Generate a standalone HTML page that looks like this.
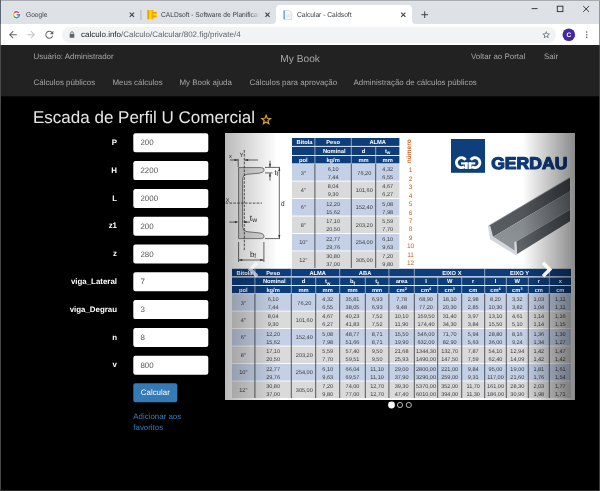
<!DOCTYPE html>
<html><head><meta charset="utf-8">
<style>
*{box-sizing:border-box;margin:0;padding:0}
html,body{width:600px;height:491px;overflow:hidden;background:#000;font-family:"Liberation Sans",sans-serif;text-rendering:geometricPrecision}
#win{position:absolute;left:0;top:0;width:600px;height:491px;overflow:hidden;background:#000;filter:blur(0.3px)}
#tabstrip{position:absolute;left:0;top:0;width:600px;height:24px;background:#dee1e6;border-top:1px solid #a9abae}
#toolbar{position:absolute;left:0;top:24px;width:600px;height:21px;background:#fff}
.tabtxt{position:absolute;top:10.9px;font-size:7.1px;color:#3c4043;white-space:nowrap;line-height:9px;transform:scaleX(.935);transform-origin:0 0}
#acttab{position:absolute;left:276px;top:5px;width:136px;height:19px;background:#fff;border-radius:4px 4px 0 0}
#omni{position:absolute;left:62px;top:27px;width:494px;height:16px;border-radius:8px;background:#f1f3f4}
#url{position:absolute;left:81px;top:30px;font-size:8px;line-height:9px;color:#5f6368;white-space:nowrap}
#url b{font-weight:normal;color:#202124}
#nav{position:absolute;left:0;top:45px;width:600px;height:51px;background:#222}
#nav2{position:absolute;left:0;top:96px;width:600px;height:1px;background:#0b0b0b}
.nv{position:absolute;font-size:7.93px;line-height:10px;color:#a6a6a6;white-space:nowrap}
#brand{position:absolute;left:280.3px;top:53.8px;font-size:10.2px;line-height:12px;color:#a6a6a6}
#title{position:absolute;left:33px;top:108px;font-size:17px;line-height:20px;color:#e6e6e6;white-space:nowrap}
.lbl{position:absolute;right:483px;font-size:7.9px;font-weight:bold;color:#fff;line-height:10px;white-space:nowrap}
.inp{position:absolute;left:133.3px;width:75px;height:19px;font-size:7.9px;line-height:19px;color:#555;padding-left:7.2px}
#btn{position:absolute;left:133.3px;top:383.3px;width:44px;height:19px;color:#fff;font-size:7.9px;line-height:19px;text-align:center}
#fav{position:absolute;left:133.3px;top:411.2px;font-size:7.9px;line-height:11px;color:#337ab7}
#img{position:absolute;left:225px;top:133px;width:350px;height:267px;background:#fff;overflow:hidden}
#ui{position:absolute;left:0;top:0;width:600px;height:491px}
</style></head><body>
<div id="win">
<div id="tabstrip"></div>
<div id="acttab"></div>
<div id="toolbar"></div>
<div id="omni"></div>
<div class="tabtxt" style="left:25.5px">Google</div>
<div class="tabtxt" style="left:161px">CALDsoft - Software de Planificaç</div><div style="position:absolute;left:251px;top:8px;width:10px;height:13px;background:linear-gradient(to right,rgba(222,225,230,0),#dee1e6 85%)"></div>
<div class="tabtxt" style="left:296.7px">Calcular - Caldsoft</div>
<div id="url"><b>calculo.info</b>/Calculo/Calcular/802.fig/private/4</div>

<div id="nav"></div><div id="nav2"></div>
<div class="nv" style="left:33.5px;top:52px">Usuário: Administrador</div>
<div id="brand">My Book</div>
<div class="nv" style="left:471px;top:52px">Voltar ao Portal</div>
<div class="nv" style="left:544px;top:52px">Sair</div>
<div class="nv" style="left:33.5px;top:78px">Cálculos públicos</div>
<div class="nv" style="left:112.5px;top:78px">Meus cálculos</div>
<div class="nv" style="left:179.5px;top:78px">My Book ajuda</div>
<div class="nv" style="left:249.5px;top:78px">Cálculos para aprovação</div>
<div class="nv" style="left:353.5px;top:78px">Administração de cálculos públicos</div>

<div id="title">Escada de Perfil U Comercial</div>

<svg style="position:absolute;left:0;top:0" width="600" height="491" viewBox="0 0 600 491">
<rect x="133.3" y="133.30" width="75" height="19" rx="2.2" fill="#fff"/>
<rect x="133.3" y="161.10" width="75" height="19" rx="2.2" fill="#fff"/>
<rect x="133.3" y="188.90" width="75" height="19" rx="2.2" fill="#fff"/>
<rect x="133.3" y="216.70" width="75" height="19" rx="2.2" fill="#fff"/>
<rect x="133.3" y="244.50" width="75" height="19" rx="2.2" fill="#fff"/>
<rect x="133.3" y="272.30" width="75" height="19" rx="2.2" fill="#fff"/>
<rect x="133.3" y="300.10" width="75" height="19" rx="2.2" fill="#fff"/>
<rect x="133.3" y="327.90" width="75" height="19" rx="2.2" fill="#fff"/>
<rect x="133.3" y="355.70" width="75" height="19" rx="2.2" fill="#fff"/>
<rect x="133.3" y="383.3" width="44" height="19" rx="2.2" fill="#337ab7"/>
</svg>
<div class="lbl" style="top:138.00px">P</div><div class="inp" style="top:133.30px">200</div>
<div class="lbl" style="top:165.80px">H</div><div class="inp" style="top:161.10px">2200</div>
<div class="lbl" style="top:193.60px">L</div><div class="inp" style="top:188.90px">2000</div>
<div class="lbl" style="top:221.40px">z1</div><div class="inp" style="top:216.70px">200</div>
<div class="lbl" style="top:249.20px">z</div><div class="inp" style="top:244.50px">280</div>
<div class="lbl" style="top:277.00px">viga_Lateral</div><div class="inp" style="top:272.30px">7</div>
<div class="lbl" style="top:304.80px">viga_Degrau</div><div class="inp" style="top:300.10px">3</div>
<div class="lbl" style="top:332.60px">n</div><div class="inp" style="top:327.90px">8</div>
<div class="lbl" style="top:360.40px">v</div><div class="inp" style="top:355.70px">800</div>
<div id="btn">Calcular</div>
<div id="fav">Adicionar aos<br>favoritos</div>

<div id="img"><svg width="350" height="267" viewBox="0 0 350 267" font-family="Liberation Sans, sans-serif" style="position:absolute;left:0;top:0;display:block"><defs><linearGradient id="gl" x1="0" x2="1" y1="0" y2="0"><stop offset="0" stop-color="#000" stop-opacity="0.27"/><stop offset="1" stop-color="#000" stop-opacity="0"/></linearGradient><linearGradient id="gr" x1="0" x2="1" y1="0" y2="0"><stop offset="0" stop-color="#000" stop-opacity="0"/><stop offset="1" stop-color="#000" stop-opacity="0.46"/></linearGradient><linearGradient id="web" x1="0" x2="1" y1="1" y2="0"><stop offset="0" stop-color="#93989d"/><stop offset="1" stop-color="#73787d"/></linearGradient><linearGradient id="fl" x1="0" x2="1" y1="1" y2="0"><stop offset="0" stop-color="#5a5f64"/><stop offset="1" stop-color="#45494e"/></linearGradient><linearGradient id="fr" x1="0" x2="1" y1="1" y2="0"><stop offset="0" stop-color="#60656a"/><stop offset="1" stop-color="#4a4f54"/></linearGradient></defs>
<rect x="0" y="0" width="350" height="267" fill="#fff" />
<rect x="67" y="5" width="107.4" height="7.9" fill="#0e3d7c" />
<rect x="67" y="13.8" width="107.4" height="8.3" fill="#0e3d7c" />
<rect x="67" y="23" width="107.4" height="7.4" fill="#0e3d7c" />
<text x="79.5" y="11.1" font-size="5.75" fill="#fff" font-weight="bold" text-anchor="middle" >Bitola</text>
<text x="108.1" y="11.1" font-size="5.75" fill="#fff" font-weight="bold" text-anchor="middle" >Peso</text>
<line x1="89.9" y1="5" x2="89.9" y2="12.9" stroke="#e8eef7" stroke-width="0.6" />
<text x="152.7" y="11.1" font-size="5.75" fill="#fff" font-weight="bold" text-anchor="middle" >ALMA</text>
<line x1="126.3" y1="5" x2="126.3" y2="12.9" stroke="#e8eef7" stroke-width="0.6" />
<text x="109.3" y="20" font-size="5.75" fill="#fff" font-weight="bold" text-anchor="middle" >Nominal</text>
<line x1="89.9" y1="13.8" x2="89.9" y2="22.1" stroke="#e8eef7" stroke-width="0.6" />
<text x="138.5" y="20" font-size="5.75" fill="#fff" font-weight="bold" text-anchor="middle" >d</text>
<line x1="126.3" y1="13.8" x2="126.3" y2="22.1" stroke="#e8eef7" stroke-width="0.6" />
<text x="162.7" y="20" font-size="5.75" fill="#fff" font-weight="bold" text-anchor="middle" >t<tspan font-size="4.6" dy="1.3">w</tspan></text>
<line x1="150.7" y1="13.8" x2="150.7" y2="22.1" stroke="#e8eef7" stroke-width="0.6" />
<text x="78.3" y="28.75" font-size="5.75" fill="#fff" font-weight="bold" text-anchor="middle" >pol</text>
<text x="108.1" y="28.75" font-size="5.75" fill="#fff" font-weight="bold" text-anchor="middle" >kg/m</text>
<line x1="89.9" y1="23" x2="89.9" y2="30.4" stroke="#e8eef7" stroke-width="0.6" />
<text x="138.5" y="28.75" font-size="5.75" fill="#fff" font-weight="bold" text-anchor="middle" >mm</text>
<line x1="126.3" y1="23" x2="126.3" y2="30.4" stroke="#e8eef7" stroke-width="0.6" />
<text x="162.7" y="28.75" font-size="5.75" fill="#fff" font-weight="bold" text-anchor="middle" >mm</text>
<line x1="150.7" y1="23" x2="150.7" y2="30.4" stroke="#e8eef7" stroke-width="0.6" />
<rect x="67" y="31.1" width="107.4" height="16.56" fill="#c4d0e6" />
<text x="78.3" y="41.5" font-size="5.55" fill="#3a3a3a" font-weight="normal" text-anchor="middle" >3"</text>
<text x="108.1" y="37.7" font-size="5.55" fill="#3a3a3a" font-weight="normal" text-anchor="middle" >6,10</text>
<text x="108.1" y="45.7" font-size="5.55" fill="#3a3a3a" font-weight="normal" text-anchor="middle" >7,44</text>
<text x="139.3" y="41.5" font-size="5.55" fill="#3a3a3a" font-weight="normal" text-anchor="middle" >76,20</text>
<text x="162.7" y="37.7" font-size="5.55" fill="#3a3a3a" font-weight="normal" text-anchor="middle" >4,32</text>
<text x="162.7" y="45.7" font-size="5.55" fill="#3a3a3a" font-weight="normal" text-anchor="middle" >6,55</text>
<rect x="67" y="48.56" width="107.4" height="16.56" fill="#dadada" />
<text x="78.3" y="58.96" font-size="5.55" fill="#3a3a3a" font-weight="normal" text-anchor="middle" >4"</text>
<text x="108.1" y="55.16" font-size="5.55" fill="#3a3a3a" font-weight="normal" text-anchor="middle" >8,04</text>
<text x="108.1" y="63.16" font-size="5.55" fill="#3a3a3a" font-weight="normal" text-anchor="middle" >9,30</text>
<text x="139.3" y="58.96" font-size="5.55" fill="#3a3a3a" font-weight="normal" text-anchor="middle" >101,60</text>
<text x="162.7" y="55.16" font-size="5.55" fill="#3a3a3a" font-weight="normal" text-anchor="middle" >4,67</text>
<text x="162.7" y="63.16" font-size="5.55" fill="#3a3a3a" font-weight="normal" text-anchor="middle" >6,27</text>
<rect x="67" y="66.02" width="107.4" height="16.56" fill="#c4d0e6" />
<text x="78.3" y="76.42" font-size="5.55" fill="#3a3a3a" font-weight="normal" text-anchor="middle" >6"</text>
<text x="108.1" y="72.62" font-size="5.55" fill="#3a3a3a" font-weight="normal" text-anchor="middle" >12,20</text>
<text x="108.1" y="80.62" font-size="5.55" fill="#3a3a3a" font-weight="normal" text-anchor="middle" >15,62</text>
<text x="139.3" y="76.42" font-size="5.55" fill="#3a3a3a" font-weight="normal" text-anchor="middle" >152,40</text>
<text x="162.7" y="72.62" font-size="5.55" fill="#3a3a3a" font-weight="normal" text-anchor="middle" >5,08</text>
<text x="162.7" y="80.62" font-size="5.55" fill="#3a3a3a" font-weight="normal" text-anchor="middle" >7,98</text>
<rect x="67" y="83.48" width="107.4" height="16.56" fill="#dadada" />
<text x="78.3" y="93.88" font-size="5.55" fill="#3a3a3a" font-weight="normal" text-anchor="middle" >8"</text>
<text x="108.1" y="90.08" font-size="5.55" fill="#3a3a3a" font-weight="normal" text-anchor="middle" >17,10</text>
<text x="108.1" y="98.08" font-size="5.55" fill="#3a3a3a" font-weight="normal" text-anchor="middle" >20,50</text>
<text x="139.3" y="93.88" font-size="5.55" fill="#3a3a3a" font-weight="normal" text-anchor="middle" >203,20</text>
<text x="162.7" y="90.08" font-size="5.55" fill="#3a3a3a" font-weight="normal" text-anchor="middle" >5,59</text>
<text x="162.7" y="98.08" font-size="5.55" fill="#3a3a3a" font-weight="normal" text-anchor="middle" >7,70</text>
<rect x="67" y="100.94" width="107.4" height="16.56" fill="#c4d0e6" />
<text x="78.3" y="111.34" font-size="5.55" fill="#3a3a3a" font-weight="normal" text-anchor="middle" >10"</text>
<text x="108.1" y="107.54" font-size="5.55" fill="#3a3a3a" font-weight="normal" text-anchor="middle" >22,77</text>
<text x="108.1" y="115.54" font-size="5.55" fill="#3a3a3a" font-weight="normal" text-anchor="middle" >29,76</text>
<text x="139.3" y="111.34" font-size="5.55" fill="#3a3a3a" font-weight="normal" text-anchor="middle" >254,00</text>
<text x="162.7" y="107.54" font-size="5.55" fill="#3a3a3a" font-weight="normal" text-anchor="middle" >6,10</text>
<text x="162.7" y="115.54" font-size="5.55" fill="#3a3a3a" font-weight="normal" text-anchor="middle" >9,63</text>
<rect x="67" y="118.4" width="107.4" height="16.56" fill="#dadada" />
<text x="78.3" y="128.8" font-size="5.55" fill="#3a3a3a" font-weight="normal" text-anchor="middle" >12"</text>
<text x="108.1" y="125" font-size="5.55" fill="#3a3a3a" font-weight="normal" text-anchor="middle" >30,80</text>
<text x="108.1" y="133" font-size="5.55" fill="#3a3a3a" font-weight="normal" text-anchor="middle" >37,00</text>
<text x="139.3" y="128.8" font-size="5.55" fill="#3a3a3a" font-weight="normal" text-anchor="middle" >305,00</text>
<text x="162.7" y="125" font-size="5.55" fill="#3a3a3a" font-weight="normal" text-anchor="middle" >7,20</text>
<text x="162.7" y="133" font-size="5.55" fill="#3a3a3a" font-weight="normal" text-anchor="middle" >9,80</text>
<line x1="89.9" y1="30.6" x2="89.9" y2="134.96" stroke="#30343a" stroke-width="0.8" />
<line x1="126.3" y1="30.6" x2="126.3" y2="134.96" stroke="#30343a" stroke-width="0.8" />
<line x1="150.7" y1="30.6" x2="150.7" y2="134.96" stroke="#30343a" stroke-width="0.8" />
<text transform="translate(186.2,30.2) rotate(-90)" font-size="6.5" fill="#c2621f" font-weight="bold">número</text>
<text x="185.6" y="39.4" font-size="6.5" fill="#c2621f" font-weight="normal" text-anchor="middle" >1</text>
<text x="185.6" y="47.82" font-size="6.5" fill="#c2621f" font-weight="normal" text-anchor="middle" >2</text>
<text x="185.6" y="56.24" font-size="6.5" fill="#c2621f" font-weight="normal" text-anchor="middle" >3</text>
<text x="185.6" y="64.66" font-size="6.5" fill="#c2621f" font-weight="normal" text-anchor="middle" >4</text>
<text x="185.6" y="73.08" font-size="6.5" fill="#c2621f" font-weight="normal" text-anchor="middle" >5</text>
<text x="185.6" y="81.5" font-size="6.5" fill="#c2621f" font-weight="normal" text-anchor="middle" >6</text>
<text x="185.6" y="89.92" font-size="6.5" fill="#c2621f" font-weight="normal" text-anchor="middle" >7</text>
<text x="185.6" y="98.34" font-size="6.5" fill="#c2621f" font-weight="normal" text-anchor="middle" >8</text>
<text x="185.6" y="106.76" font-size="6.5" fill="#c2621f" font-weight="normal" text-anchor="middle" >9</text>
<text x="185.6" y="115.18" font-size="6.5" fill="#c2621f" font-weight="normal" text-anchor="middle" >10</text>
<text x="185.6" y="123.6" font-size="6.5" fill="#c2621f" font-weight="normal" text-anchor="middle" >11</text>
<text x="185.6" y="132.02" font-size="6.5" fill="#c2621f" font-weight="normal" text-anchor="middle" >12</text>
<rect x="226" y="6" width="34" height="33.8" fill="#0f3f7a" />
<path d="M240.55 26.85 A5 5 0 1 0 239.48 33.59" fill="none" stroke="#fff" stroke-width="2.9"/><path d="M241.25 29.45 L241.25 35.95" fill="none" stroke="#fff" stroke-width="2.9"/><path d="M236 30.4 L242.6 30.4" fill="none" stroke="#fff" stroke-width="2.1"/>
<path d="M245.75 26.85 A5 5 0 1 1 246.82 33.59" fill="none" stroke="#fff" stroke-width="2.9"/><path d="M245.05 29.45 L245.05 35.95" fill="none" stroke="#fff" stroke-width="2.9"/><path d="M250.3 30.4 L243.7 30.4" fill="none" stroke="#fff" stroke-width="2.1"/>
<text x="266.2" y="35.9" font-size="16.8" font-weight="bold" fill="#0f3a79" stroke="#0f3a79" stroke-width="1.2" stroke-linejoin="round" textLength="76.2" lengthAdjust="spacingAndGlyphs">GERDAU</text>
<polygon points="263.5,93 345,44.7 345,58.2 267.5,104.2" fill="url(#fl)" />
<polygon points="267.5,104.2 345,58.2 345,76.6 291,108.6 291.4,120" fill="url(#web)" />
<polygon points="291,108.6 345,76.6 345,88.2 291.8,121.2" fill="url(#fr)" />
<polygon points="263,93.2 265.2,92.4 268,103.6 289.6,117.4 289.3,109 291.4,108 292.2,121.6 290.4,122 265,106.2" fill="#d3d7db" />
<line x1="263.6" y1="92.9" x2="345" y2="44.6" stroke="#7d8287" stroke-width="0.7" />
<line x1="291" y1="108.5" x2="345" y2="76.5" stroke="#8d9297" stroke-width="0.7" />
<rect x="7" y="135.8" width="339" height="7.5" fill="#0e3d7c" />
<rect x="7" y="144.5" width="339" height="7.5" fill="#0e3d7c" />
<rect x="7" y="153" width="339" height="7.2" fill="#0e3d7c" />
<text x="19.5" y="141.7" font-size="5.75" fill="#fff" font-weight="bold" text-anchor="middle" >Bitola</text>
<text x="48.1" y="141.7" font-size="5.75" fill="#fff" font-weight="bold" text-anchor="middle" >Peso</text>
<line x1="29.9" y1="135.8" x2="29.9" y2="143.3" stroke="#e8eef7" stroke-width="0.6" />
<text x="92.7" y="141.7" font-size="5.75" fill="#fff" font-weight="bold" text-anchor="middle" >ALMA</text>
<line x1="66.3" y1="135.8" x2="66.3" y2="143.3" stroke="#e8eef7" stroke-width="0.6" />
<text x="140.1" y="141.7" font-size="5.75" fill="#fff" font-weight="bold" text-anchor="middle" >ABA</text>
<line x1="114.7" y1="135.8" x2="114.7" y2="143.3" stroke="#e8eef7" stroke-width="0.6" />
<line x1="163.9" y1="135.8" x2="163.9" y2="143.3" stroke="#e8eef7" stroke-width="0.6" />
<text x="226.9" y="141.7" font-size="5.75" fill="#fff" font-weight="bold" text-anchor="middle" >EIXO X</text>
<line x1="189.3" y1="135.8" x2="189.3" y2="143.3" stroke="#e8eef7" stroke-width="0.6" />
<text x="294.6" y="141.7" font-size="5.75" fill="#fff" font-weight="bold" text-anchor="middle" >EIXO Y</text>
<line x1="259.7" y1="135.8" x2="259.7" y2="143.3" stroke="#e8eef7" stroke-width="0.6" />
<line x1="324.3" y1="135.8" x2="324.3" y2="143.3" stroke="#e8eef7" stroke-width="0.6" />
<text x="49.3" y="150.3" font-size="5.75" fill="#fff" font-weight="bold" text-anchor="middle" >Nominal</text>
<line x1="29.9" y1="144.5" x2="29.9" y2="152" stroke="#e8eef7" stroke-width="0.6" />
<text x="78.5" y="150.3" font-size="5.75" fill="#fff" font-weight="bold" text-anchor="middle" >d</text>
<line x1="66.3" y1="144.5" x2="66.3" y2="152" stroke="#e8eef7" stroke-width="0.6" />
<text x="102.7" y="150.3" font-size="5.75" fill="#fff" font-weight="bold" text-anchor="middle" >t<tspan font-size="4.6" dy="1.3">w</tspan></text>
<line x1="90.7" y1="144.5" x2="90.7" y2="152" stroke="#e8eef7" stroke-width="0.6" />
<text x="127.5" y="150.3" font-size="5.75" fill="#fff" font-weight="bold" text-anchor="middle" >b<tspan font-size="4.6" dy="1.3">f</tspan></text>
<line x1="114.7" y1="144.5" x2="114.7" y2="152" stroke="#e8eef7" stroke-width="0.6" />
<text x="152.1" y="150.3" font-size="5.75" fill="#fff" font-weight="bold" text-anchor="middle" >t<tspan font-size="4.6" dy="1.3">f</tspan></text>
<line x1="140.3" y1="144.5" x2="140.3" y2="152" stroke="#e8eef7" stroke-width="0.6" />
<text x="176.6" y="150.3" font-size="5.75" fill="#fff" font-weight="bold" text-anchor="middle" >area</text>
<line x1="163.9" y1="144.5" x2="163.9" y2="152" stroke="#e8eef7" stroke-width="0.6" />
<text x="201" y="150.3" font-size="5.75" fill="#fff" font-weight="bold" text-anchor="middle" >I</text>
<line x1="189.3" y1="144.5" x2="189.3" y2="152" stroke="#e8eef7" stroke-width="0.6" />
<text x="224.7" y="150.3" font-size="5.75" fill="#fff" font-weight="bold" text-anchor="middle" >W</text>
<line x1="212.7" y1="144.5" x2="212.7" y2="152" stroke="#e8eef7" stroke-width="0.6" />
<text x="248.2" y="150.3" font-size="5.75" fill="#fff" font-weight="bold" text-anchor="middle" >r</text>
<line x1="236.7" y1="144.5" x2="236.7" y2="152" stroke="#e8eef7" stroke-width="0.6" />
<text x="270.5" y="150.3" font-size="5.75" fill="#fff" font-weight="bold" text-anchor="middle" >I</text>
<line x1="259.7" y1="144.5" x2="259.7" y2="152" stroke="#e8eef7" stroke-width="0.6" />
<text x="292.3" y="150.3" font-size="5.75" fill="#fff" font-weight="bold" text-anchor="middle" >W</text>
<line x1="281.3" y1="144.5" x2="281.3" y2="152" stroke="#e8eef7" stroke-width="0.6" />
<text x="313.8" y="150.3" font-size="5.75" fill="#fff" font-weight="bold" text-anchor="middle" >r</text>
<line x1="303.3" y1="144.5" x2="303.3" y2="152" stroke="#e8eef7" stroke-width="0.6" />
<text x="335.3" y="150.3" font-size="5.75" fill="#fff" font-weight="bold" text-anchor="middle" >x</text>
<line x1="324.3" y1="144.5" x2="324.3" y2="152" stroke="#e8eef7" stroke-width="0.6" />
<text x="18.3" y="158.65" font-size="5.75" fill="#fff" font-weight="bold" text-anchor="middle" >pol</text>
<text x="48.1" y="158.65" font-size="5.75" fill="#fff" font-weight="bold" text-anchor="middle" >kg/m</text>
<line x1="29.9" y1="153" x2="29.9" y2="160.2" stroke="#e8eef7" stroke-width="0.6" />
<text x="78.5" y="158.65" font-size="5.75" fill="#fff" font-weight="bold" text-anchor="middle" >mm</text>
<line x1="66.3" y1="153" x2="66.3" y2="160.2" stroke="#e8eef7" stroke-width="0.6" />
<text x="102.7" y="158.65" font-size="5.75" fill="#fff" font-weight="bold" text-anchor="middle" >mm</text>
<line x1="90.7" y1="153" x2="90.7" y2="160.2" stroke="#e8eef7" stroke-width="0.6" />
<text x="127.5" y="158.65" font-size="5.75" fill="#fff" font-weight="bold" text-anchor="middle" >mm</text>
<line x1="114.7" y1="153" x2="114.7" y2="160.2" stroke="#e8eef7" stroke-width="0.6" />
<text x="152.1" y="158.65" font-size="5.75" fill="#fff" font-weight="bold" text-anchor="middle" >mm</text>
<line x1="140.3" y1="153" x2="140.3" y2="160.2" stroke="#e8eef7" stroke-width="0.6" />
<text x="176.6" y="158.65" font-size="5.75" fill="#fff" font-weight="bold" text-anchor="middle" >cm<tspan font-size="3.74" dy="-1.6">2</tspan></text>
<line x1="163.9" y1="153" x2="163.9" y2="160.2" stroke="#e8eef7" stroke-width="0.6" />
<text x="201" y="158.65" font-size="5.75" fill="#fff" font-weight="bold" text-anchor="middle" >cm<tspan font-size="3.74" dy="-1.6">4</tspan></text>
<line x1="189.3" y1="153" x2="189.3" y2="160.2" stroke="#e8eef7" stroke-width="0.6" />
<text x="224.7" y="158.65" font-size="5.75" fill="#fff" font-weight="bold" text-anchor="middle" >cm<tspan font-size="3.74" dy="-1.6">3</tspan></text>
<line x1="212.7" y1="153" x2="212.7" y2="160.2" stroke="#e8eef7" stroke-width="0.6" />
<text x="248.2" y="158.65" font-size="5.75" fill="#fff" font-weight="bold" text-anchor="middle" >cm</text>
<line x1="236.7" y1="153" x2="236.7" y2="160.2" stroke="#e8eef7" stroke-width="0.6" />
<text x="270.5" y="158.65" font-size="5.75" fill="#fff" font-weight="bold" text-anchor="middle" >cm<tspan font-size="3.74" dy="-1.6">4</tspan></text>
<line x1="259.7" y1="153" x2="259.7" y2="160.2" stroke="#e8eef7" stroke-width="0.6" />
<text x="292.3" y="158.65" font-size="5.75" fill="#fff" font-weight="bold" text-anchor="middle" >cm<tspan font-size="3.74" dy="-1.6">3</tspan></text>
<line x1="281.3" y1="153" x2="281.3" y2="160.2" stroke="#e8eef7" stroke-width="0.6" />
<text x="313.8" y="158.65" font-size="5.75" fill="#fff" font-weight="bold" text-anchor="middle" >cm</text>
<line x1="303.3" y1="153" x2="303.3" y2="160.2" stroke="#e8eef7" stroke-width="0.6" />
<text x="335.3" y="158.65" font-size="5.75" fill="#fff" font-weight="bold" text-anchor="middle" >cm</text>
<line x1="324.3" y1="153" x2="324.3" y2="160.2" stroke="#e8eef7" stroke-width="0.6" />
<rect x="7" y="161.1" width="339" height="16.57" fill="#c4d0e6" />
<text x="18.3" y="171.5" font-size="5.55" fill="#3a3a3a" font-weight="normal" text-anchor="middle" >3"</text>
<text x="48.1" y="167.7" font-size="5.55" fill="#3a3a3a" font-weight="normal" text-anchor="middle" >6,10</text>
<text x="48.1" y="175.7" font-size="5.55" fill="#3a3a3a" font-weight="normal" text-anchor="middle" >7,44</text>
<text x="79.3" y="171.5" font-size="5.55" fill="#3a3a3a" font-weight="normal" text-anchor="middle" >76,20</text>
<text x="102.7" y="167.7" font-size="5.55" fill="#3a3a3a" font-weight="normal" text-anchor="middle" >4,32</text>
<text x="102.7" y="175.7" font-size="5.55" fill="#3a3a3a" font-weight="normal" text-anchor="middle" >6,55</text>
<text x="127.5" y="167.7" font-size="5.55" fill="#3a3a3a" font-weight="normal" text-anchor="middle" >35,81</text>
<text x="127.5" y="175.7" font-size="5.55" fill="#3a3a3a" font-weight="normal" text-anchor="middle" >38,05</text>
<text x="152.1" y="167.7" font-size="5.55" fill="#3a3a3a" font-weight="normal" text-anchor="middle" >6,93</text>
<text x="152.1" y="175.7" font-size="5.55" fill="#3a3a3a" font-weight="normal" text-anchor="middle" >6,93</text>
<text x="176.6" y="167.7" font-size="5.55" fill="#3a3a3a" font-weight="normal" text-anchor="middle" >7,78</text>
<text x="176.6" y="175.7" font-size="5.55" fill="#3a3a3a" font-weight="normal" text-anchor="middle" >9,48</text>
<text x="201" y="167.7" font-size="5.55" fill="#3a3a3a" font-weight="normal" text-anchor="middle" >68,90</text>
<text x="201" y="175.7" font-size="5.55" fill="#3a3a3a" font-weight="normal" text-anchor="middle" >77,20</text>
<text x="224.7" y="167.7" font-size="5.55" fill="#3a3a3a" font-weight="normal" text-anchor="middle" >18,10</text>
<text x="224.7" y="175.7" font-size="5.55" fill="#3a3a3a" font-weight="normal" text-anchor="middle" >20,30</text>
<text x="248.2" y="167.7" font-size="5.55" fill="#3a3a3a" font-weight="normal" text-anchor="middle" >2,98</text>
<text x="248.2" y="175.7" font-size="5.55" fill="#3a3a3a" font-weight="normal" text-anchor="middle" >2,85</text>
<text x="270.5" y="167.7" font-size="5.55" fill="#3a3a3a" font-weight="normal" text-anchor="middle" >8,20</text>
<text x="270.5" y="175.7" font-size="5.55" fill="#3a3a3a" font-weight="normal" text-anchor="middle" >10,30</text>
<text x="292.3" y="167.7" font-size="5.55" fill="#3a3a3a" font-weight="normal" text-anchor="middle" >3,32</text>
<text x="292.3" y="175.7" font-size="5.55" fill="#3a3a3a" font-weight="normal" text-anchor="middle" >3,82</text>
<text x="313.8" y="167.7" font-size="5.55" fill="#3a3a3a" font-weight="normal" text-anchor="middle" >1,03</text>
<text x="313.8" y="175.7" font-size="5.55" fill="#3a3a3a" font-weight="normal" text-anchor="middle" >1,04</text>
<text x="335.3" y="167.7" font-size="5.55" fill="#3a3a3a" font-weight="normal" text-anchor="middle" >1,11</text>
<text x="335.3" y="175.7" font-size="5.55" fill="#3a3a3a" font-weight="normal" text-anchor="middle" >1,11</text>
<rect x="7" y="178.57" width="339" height="16.57" fill="#dadada" />
<text x="18.3" y="188.97" font-size="5.55" fill="#3a3a3a" font-weight="normal" text-anchor="middle" >4"</text>
<text x="48.1" y="185.17" font-size="5.55" fill="#3a3a3a" font-weight="normal" text-anchor="middle" >8,04</text>
<text x="48.1" y="193.17" font-size="5.55" fill="#3a3a3a" font-weight="normal" text-anchor="middle" >9,30</text>
<text x="79.3" y="188.97" font-size="5.55" fill="#3a3a3a" font-weight="normal" text-anchor="middle" >101,60</text>
<text x="102.7" y="185.17" font-size="5.55" fill="#3a3a3a" font-weight="normal" text-anchor="middle" >4,67</text>
<text x="102.7" y="193.17" font-size="5.55" fill="#3a3a3a" font-weight="normal" text-anchor="middle" >6,27</text>
<text x="127.5" y="185.17" font-size="5.55" fill="#3a3a3a" font-weight="normal" text-anchor="middle" >40,23</text>
<text x="127.5" y="193.17" font-size="5.55" fill="#3a3a3a" font-weight="normal" text-anchor="middle" >41,83</text>
<text x="152.1" y="185.17" font-size="5.55" fill="#3a3a3a" font-weight="normal" text-anchor="middle" >7,52</text>
<text x="152.1" y="193.17" font-size="5.55" fill="#3a3a3a" font-weight="normal" text-anchor="middle" >7,52</text>
<text x="176.6" y="185.17" font-size="5.55" fill="#3a3a3a" font-weight="normal" text-anchor="middle" >10,10</text>
<text x="176.6" y="193.17" font-size="5.55" fill="#3a3a3a" font-weight="normal" text-anchor="middle" >11,90</text>
<text x="201" y="185.17" font-size="5.55" fill="#3a3a3a" font-weight="normal" text-anchor="middle" >159,50</text>
<text x="201" y="193.17" font-size="5.55" fill="#3a3a3a" font-weight="normal" text-anchor="middle" >174,40</text>
<text x="224.7" y="185.17" font-size="5.55" fill="#3a3a3a" font-weight="normal" text-anchor="middle" >31,40</text>
<text x="224.7" y="193.17" font-size="5.55" fill="#3a3a3a" font-weight="normal" text-anchor="middle" >34,30</text>
<text x="248.2" y="185.17" font-size="5.55" fill="#3a3a3a" font-weight="normal" text-anchor="middle" >3,97</text>
<text x="248.2" y="193.17" font-size="5.55" fill="#3a3a3a" font-weight="normal" text-anchor="middle" >3,84</text>
<text x="270.5" y="185.17" font-size="5.55" fill="#3a3a3a" font-weight="normal" text-anchor="middle" >13,10</text>
<text x="270.5" y="193.17" font-size="5.55" fill="#3a3a3a" font-weight="normal" text-anchor="middle" >15,50</text>
<text x="292.3" y="185.17" font-size="5.55" fill="#3a3a3a" font-weight="normal" text-anchor="middle" >4,61</text>
<text x="292.3" y="193.17" font-size="5.55" fill="#3a3a3a" font-weight="normal" text-anchor="middle" >5,10</text>
<text x="313.8" y="185.17" font-size="5.55" fill="#3a3a3a" font-weight="normal" text-anchor="middle" >1,14</text>
<text x="313.8" y="193.17" font-size="5.55" fill="#3a3a3a" font-weight="normal" text-anchor="middle" >1,14</text>
<text x="335.3" y="185.17" font-size="5.55" fill="#3a3a3a" font-weight="normal" text-anchor="middle" >1,16</text>
<text x="335.3" y="193.17" font-size="5.55" fill="#3a3a3a" font-weight="normal" text-anchor="middle" >1,15</text>
<rect x="7" y="196.04" width="339" height="16.57" fill="#c4d0e6" />
<text x="18.3" y="206.44" font-size="5.55" fill="#3a3a3a" font-weight="normal" text-anchor="middle" >6"</text>
<text x="48.1" y="202.64" font-size="5.55" fill="#3a3a3a" font-weight="normal" text-anchor="middle" >12,20</text>
<text x="48.1" y="210.64" font-size="5.55" fill="#3a3a3a" font-weight="normal" text-anchor="middle" >15,62</text>
<text x="79.3" y="206.44" font-size="5.55" fill="#3a3a3a" font-weight="normal" text-anchor="middle" >152,40</text>
<text x="102.7" y="202.64" font-size="5.55" fill="#3a3a3a" font-weight="normal" text-anchor="middle" >5,08</text>
<text x="102.7" y="210.64" font-size="5.55" fill="#3a3a3a" font-weight="normal" text-anchor="middle" >7,98</text>
<text x="127.5" y="202.64" font-size="5.55" fill="#3a3a3a" font-weight="normal" text-anchor="middle" >48,77</text>
<text x="127.5" y="210.64" font-size="5.55" fill="#3a3a3a" font-weight="normal" text-anchor="middle" >51,66</text>
<text x="152.1" y="202.64" font-size="5.55" fill="#3a3a3a" font-weight="normal" text-anchor="middle" >8,71</text>
<text x="152.1" y="210.64" font-size="5.55" fill="#3a3a3a" font-weight="normal" text-anchor="middle" >8,71</text>
<text x="176.6" y="202.64" font-size="5.55" fill="#3a3a3a" font-weight="normal" text-anchor="middle" >15,50</text>
<text x="176.6" y="210.64" font-size="5.55" fill="#3a3a3a" font-weight="normal" text-anchor="middle" >19,90</text>
<text x="201" y="202.64" font-size="5.55" fill="#3a3a3a" font-weight="normal" text-anchor="middle" >546,00</text>
<text x="201" y="210.64" font-size="5.55" fill="#3a3a3a" font-weight="normal" text-anchor="middle" >632,00</text>
<text x="224.7" y="202.64" font-size="5.55" fill="#3a3a3a" font-weight="normal" text-anchor="middle" >71,70</text>
<text x="224.7" y="210.64" font-size="5.55" fill="#3a3a3a" font-weight="normal" text-anchor="middle" >82,90</text>
<text x="248.2" y="202.64" font-size="5.55" fill="#3a3a3a" font-weight="normal" text-anchor="middle" >5,94</text>
<text x="248.2" y="210.64" font-size="5.55" fill="#3a3a3a" font-weight="normal" text-anchor="middle" >5,63</text>
<text x="270.5" y="202.64" font-size="5.55" fill="#3a3a3a" font-weight="normal" text-anchor="middle" >28,80</text>
<text x="270.5" y="210.64" font-size="5.55" fill="#3a3a3a" font-weight="normal" text-anchor="middle" >36,00</text>
<text x="292.3" y="202.64" font-size="5.55" fill="#3a3a3a" font-weight="normal" text-anchor="middle" >8,16</text>
<text x="292.3" y="210.64" font-size="5.55" fill="#3a3a3a" font-weight="normal" text-anchor="middle" >9,24</text>
<text x="313.8" y="202.64" font-size="5.55" fill="#3a3a3a" font-weight="normal" text-anchor="middle" >1,36</text>
<text x="313.8" y="210.64" font-size="5.55" fill="#3a3a3a" font-weight="normal" text-anchor="middle" >1,34</text>
<text x="335.3" y="202.64" font-size="5.55" fill="#3a3a3a" font-weight="normal" text-anchor="middle" >1,30</text>
<text x="335.3" y="210.64" font-size="5.55" fill="#3a3a3a" font-weight="normal" text-anchor="middle" >1,27</text>
<rect x="7" y="213.51" width="339" height="16.57" fill="#dadada" />
<text x="18.3" y="223.91" font-size="5.55" fill="#3a3a3a" font-weight="normal" text-anchor="middle" >8"</text>
<text x="48.1" y="220.11" font-size="5.55" fill="#3a3a3a" font-weight="normal" text-anchor="middle" >17,10</text>
<text x="48.1" y="228.11" font-size="5.55" fill="#3a3a3a" font-weight="normal" text-anchor="middle" >20,50</text>
<text x="79.3" y="223.91" font-size="5.55" fill="#3a3a3a" font-weight="normal" text-anchor="middle" >203,20</text>
<text x="102.7" y="220.11" font-size="5.55" fill="#3a3a3a" font-weight="normal" text-anchor="middle" >5,59</text>
<text x="102.7" y="228.11" font-size="5.55" fill="#3a3a3a" font-weight="normal" text-anchor="middle" >7,70</text>
<text x="127.5" y="220.11" font-size="5.55" fill="#3a3a3a" font-weight="normal" text-anchor="middle" >57,40</text>
<text x="127.5" y="228.11" font-size="5.55" fill="#3a3a3a" font-weight="normal" text-anchor="middle" >59,51</text>
<text x="152.1" y="220.11" font-size="5.55" fill="#3a3a3a" font-weight="normal" text-anchor="middle" >9,50</text>
<text x="152.1" y="228.11" font-size="5.55" fill="#3a3a3a" font-weight="normal" text-anchor="middle" >9,50</text>
<text x="176.6" y="220.11" font-size="5.55" fill="#3a3a3a" font-weight="normal" text-anchor="middle" >21,68</text>
<text x="176.6" y="228.11" font-size="5.55" fill="#3a3a3a" font-weight="normal" text-anchor="middle" >25,93</text>
<text x="201" y="220.11" font-size="5.55" fill="#3a3a3a" font-weight="normal" text-anchor="middle" >1344,30</text>
<text x="201" y="228.11" font-size="5.55" fill="#3a3a3a" font-weight="normal" text-anchor="middle" >1490,00</text>
<text x="224.7" y="220.11" font-size="5.55" fill="#3a3a3a" font-weight="normal" text-anchor="middle" >132,70</text>
<text x="224.7" y="228.11" font-size="5.55" fill="#3a3a3a" font-weight="normal" text-anchor="middle" >147,50</text>
<text x="248.2" y="220.11" font-size="5.55" fill="#3a3a3a" font-weight="normal" text-anchor="middle" >7,87</text>
<text x="248.2" y="228.11" font-size="5.55" fill="#3a3a3a" font-weight="normal" text-anchor="middle" >7,59</text>
<text x="270.5" y="220.11" font-size="5.55" fill="#3a3a3a" font-weight="normal" text-anchor="middle" >54,10</text>
<text x="270.5" y="228.11" font-size="5.55" fill="#3a3a3a" font-weight="normal" text-anchor="middle" >62,40</text>
<text x="292.3" y="220.11" font-size="5.55" fill="#3a3a3a" font-weight="normal" text-anchor="middle" >12,94</text>
<text x="292.3" y="228.11" font-size="5.55" fill="#3a3a3a" font-weight="normal" text-anchor="middle" >14,09</text>
<text x="313.8" y="220.11" font-size="5.55" fill="#3a3a3a" font-weight="normal" text-anchor="middle" >1,42</text>
<text x="313.8" y="228.11" font-size="5.55" fill="#3a3a3a" font-weight="normal" text-anchor="middle" >1,42</text>
<text x="335.3" y="220.11" font-size="5.55" fill="#3a3a3a" font-weight="normal" text-anchor="middle" >1,47</text>
<text x="335.3" y="228.11" font-size="5.55" fill="#3a3a3a" font-weight="normal" text-anchor="middle" >1,42</text>
<rect x="7" y="230.98" width="339" height="16.57" fill="#c4d0e6" />
<text x="18.3" y="241.38" font-size="5.55" fill="#3a3a3a" font-weight="normal" text-anchor="middle" >10"</text>
<text x="48.1" y="237.58" font-size="5.55" fill="#3a3a3a" font-weight="normal" text-anchor="middle" >22,77</text>
<text x="48.1" y="245.58" font-size="5.55" fill="#3a3a3a" font-weight="normal" text-anchor="middle" >29,76</text>
<text x="79.3" y="241.38" font-size="5.55" fill="#3a3a3a" font-weight="normal" text-anchor="middle" >254,00</text>
<text x="102.7" y="237.58" font-size="5.55" fill="#3a3a3a" font-weight="normal" text-anchor="middle" >6,10</text>
<text x="102.7" y="245.58" font-size="5.55" fill="#3a3a3a" font-weight="normal" text-anchor="middle" >9,63</text>
<text x="127.5" y="237.58" font-size="5.55" fill="#3a3a3a" font-weight="normal" text-anchor="middle" >66,04</text>
<text x="127.5" y="245.58" font-size="5.55" fill="#3a3a3a" font-weight="normal" text-anchor="middle" >69,57</text>
<text x="152.1" y="237.58" font-size="5.55" fill="#3a3a3a" font-weight="normal" text-anchor="middle" >11,10</text>
<text x="152.1" y="245.58" font-size="5.55" fill="#3a3a3a" font-weight="normal" text-anchor="middle" >11,10</text>
<text x="176.6" y="237.58" font-size="5.55" fill="#3a3a3a" font-weight="normal" text-anchor="middle" >29,00</text>
<text x="176.6" y="245.58" font-size="5.55" fill="#3a3a3a" font-weight="normal" text-anchor="middle" >37,90</text>
<text x="201" y="237.58" font-size="5.55" fill="#3a3a3a" font-weight="normal" text-anchor="middle" >2800,00</text>
<text x="201" y="245.58" font-size="5.55" fill="#3a3a3a" font-weight="normal" text-anchor="middle" >3290,00</text>
<text x="224.7" y="237.58" font-size="5.55" fill="#3a3a3a" font-weight="normal" text-anchor="middle" >221,00</text>
<text x="224.7" y="245.58" font-size="5.55" fill="#3a3a3a" font-weight="normal" text-anchor="middle" >259,00</text>
<text x="248.2" y="237.58" font-size="5.55" fill="#3a3a3a" font-weight="normal" text-anchor="middle" >9,84</text>
<text x="248.2" y="245.58" font-size="5.55" fill="#3a3a3a" font-weight="normal" text-anchor="middle" >9,31</text>
<text x="270.5" y="237.58" font-size="5.55" fill="#3a3a3a" font-weight="normal" text-anchor="middle" >95,00</text>
<text x="270.5" y="245.58" font-size="5.55" fill="#3a3a3a" font-weight="normal" text-anchor="middle" >117,00</text>
<text x="292.3" y="237.58" font-size="5.55" fill="#3a3a3a" font-weight="normal" text-anchor="middle" >19,00</text>
<text x="292.3" y="245.58" font-size="5.55" fill="#3a3a3a" font-weight="normal" text-anchor="middle" >21,60</text>
<text x="313.8" y="237.58" font-size="5.55" fill="#3a3a3a" font-weight="normal" text-anchor="middle" >1,81</text>
<text x="313.8" y="245.58" font-size="5.55" fill="#3a3a3a" font-weight="normal" text-anchor="middle" >1,76</text>
<text x="335.3" y="237.58" font-size="5.55" fill="#3a3a3a" font-weight="normal" text-anchor="middle" >1,61</text>
<text x="335.3" y="245.58" font-size="5.55" fill="#3a3a3a" font-weight="normal" text-anchor="middle" >1,54</text>
<rect x="7" y="248.45" width="339" height="16.57" fill="#dadada" />
<text x="18.3" y="258.85" font-size="5.55" fill="#3a3a3a" font-weight="normal" text-anchor="middle" >12"</text>
<text x="48.1" y="255.05" font-size="5.55" fill="#3a3a3a" font-weight="normal" text-anchor="middle" >30,80</text>
<text x="48.1" y="263.05" font-size="5.55" fill="#3a3a3a" font-weight="normal" text-anchor="middle" >37,00</text>
<text x="79.3" y="258.85" font-size="5.55" fill="#3a3a3a" font-weight="normal" text-anchor="middle" >305,00</text>
<text x="102.7" y="255.05" font-size="5.55" fill="#3a3a3a" font-weight="normal" text-anchor="middle" >7,20</text>
<text x="102.7" y="263.05" font-size="5.55" fill="#3a3a3a" font-weight="normal" text-anchor="middle" >9,80</text>
<text x="127.5" y="255.05" font-size="5.55" fill="#3a3a3a" font-weight="normal" text-anchor="middle" >74,00</text>
<text x="127.5" y="263.05" font-size="5.55" fill="#3a3a3a" font-weight="normal" text-anchor="middle" >77,00</text>
<text x="152.1" y="255.05" font-size="5.55" fill="#3a3a3a" font-weight="normal" text-anchor="middle" >12,70</text>
<text x="152.1" y="263.05" font-size="5.55" fill="#3a3a3a" font-weight="normal" text-anchor="middle" >12,70</text>
<text x="176.6" y="255.05" font-size="5.55" fill="#3a3a3a" font-weight="normal" text-anchor="middle" >39,30</text>
<text x="176.6" y="263.05" font-size="5.55" fill="#3a3a3a" font-weight="normal" text-anchor="middle" >47,40</text>
<text x="201" y="255.05" font-size="5.55" fill="#3a3a3a" font-weight="normal" text-anchor="middle" >5370,00</text>
<text x="201" y="263.05" font-size="5.55" fill="#3a3a3a" font-weight="normal" text-anchor="middle" >6010,00</text>
<text x="224.7" y="255.05" font-size="5.55" fill="#3a3a3a" font-weight="normal" text-anchor="middle" >352,00</text>
<text x="224.7" y="263.05" font-size="5.55" fill="#3a3a3a" font-weight="normal" text-anchor="middle" >394,00</text>
<text x="248.2" y="255.05" font-size="5.55" fill="#3a3a3a" font-weight="normal" text-anchor="middle" >11,70</text>
<text x="248.2" y="263.05" font-size="5.55" fill="#3a3a3a" font-weight="normal" text-anchor="middle" >11,30</text>
<text x="270.5" y="255.05" font-size="5.55" fill="#3a3a3a" font-weight="normal" text-anchor="middle" >161,00</text>
<text x="270.5" y="263.05" font-size="5.55" fill="#3a3a3a" font-weight="normal" text-anchor="middle" >186,00</text>
<text x="292.3" y="255.05" font-size="5.55" fill="#3a3a3a" font-weight="normal" text-anchor="middle" >28,30</text>
<text x="292.3" y="263.05" font-size="5.55" fill="#3a3a3a" font-weight="normal" text-anchor="middle" >30,90</text>
<text x="313.8" y="255.05" font-size="5.55" fill="#3a3a3a" font-weight="normal" text-anchor="middle" >2,03</text>
<text x="313.8" y="263.05" font-size="5.55" fill="#3a3a3a" font-weight="normal" text-anchor="middle" >1,98</text>
<text x="335.3" y="255.05" font-size="5.55" fill="#3a3a3a" font-weight="normal" text-anchor="middle" >1,77</text>
<text x="335.3" y="263.05" font-size="5.55" fill="#3a3a3a" font-weight="normal" text-anchor="middle" >1,71</text>
<line x1="29.9" y1="160.6" x2="29.9" y2="265.02" stroke="#30343a" stroke-width="0.8" />
<line x1="66.3" y1="160.6" x2="66.3" y2="265.02" stroke="#30343a" stroke-width="0.8" />
<line x1="90.7" y1="160.6" x2="90.7" y2="265.02" stroke="#30343a" stroke-width="0.8" />
<line x1="114.7" y1="160.6" x2="114.7" y2="265.02" stroke="#30343a" stroke-width="0.8" />
<line x1="140.3" y1="160.6" x2="140.3" y2="265.02" stroke="#30343a" stroke-width="0.8" />
<line x1="163.9" y1="160.6" x2="163.9" y2="265.02" stroke="#30343a" stroke-width="0.8" />
<line x1="189.3" y1="160.6" x2="189.3" y2="265.02" stroke="#30343a" stroke-width="0.8" />
<line x1="212.7" y1="160.6" x2="212.7" y2="265.02" stroke="#30343a" stroke-width="0.8" />
<line x1="236.7" y1="160.6" x2="236.7" y2="265.02" stroke="#30343a" stroke-width="0.8" />
<line x1="259.7" y1="160.6" x2="259.7" y2="265.02" stroke="#30343a" stroke-width="0.8" />
<line x1="281.3" y1="160.6" x2="281.3" y2="265.02" stroke="#30343a" stroke-width="0.8" />
<line x1="303.3" y1="160.6" x2="303.3" y2="265.02" stroke="#30343a" stroke-width="0.8" />
<line x1="324.3" y1="160.6" x2="324.3" y2="265.02" stroke="#30343a" stroke-width="0.8" />
<path d="M 13.6 34.6 L 36.3 34.6 Q 39.5 34.8 39.1 37.2 Q 38.5 39.8 34.3 40.2 L 22 41.3 Q 18.1 41.7 17.6 45.4 L 17.6 94.6 Q 18.1 98.3 22 98.7 L 34.3 99.9 Q 38.5 100.3 39.1 103 Q 39.5 105.5 36.3 105.6 L 13.6 105.6 Z" fill="#dedede" stroke="#555" stroke-width="0.75"/>
<line x1="19.3" y1="17" x2="19.3" y2="118" stroke="#2e2e2e" stroke-width="0.8" stroke-dasharray="2.6 1.3"/>
<line x1="0.5" y1="70.1" x2="37" y2="70.1" stroke="#2e2e2e" stroke-width="0.8" stroke-dasharray="2.6 1.3"/>
<line x1="5" y1="27" x2="13" y2="27" stroke="#2e2e2e" stroke-width="0.72" />
<line x1="19.5" y1="27" x2="33" y2="27" stroke="#2e2e2e" stroke-width="0.72" />
<line x1="13.2" y1="25.8" x2="13.2" y2="34" stroke="#2e2e2e" stroke-width="0.72" />
<polygon points="13,27 9.5,26 9.5,28" fill="#2e2e2e" />
<polygon points="19.6,27 23.1,26 23.1,28" fill="#2e2e2e" />
<line x1="45" y1="27.7" x2="45" y2="34" stroke="#2e2e2e" stroke-width="0.72" />
<line x1="45" y1="40" x2="45" y2="47.7" stroke="#2e2e2e" stroke-width="0.72" />
<polygon points="45,34.2 44,30.7 46,30.7" fill="#2e2e2e" />
<polygon points="45,40.1 44,43.6 46,43.6" fill="#2e2e2e" />
<line x1="40" y1="34.4" x2="55" y2="34.4" stroke="#2e2e2e" stroke-width="0.72" />
<line x1="40" y1="39.9" x2="47.5" y2="39.9" stroke="#2e2e2e" stroke-width="0.72" />
<line x1="54.3" y1="34.6" x2="54.3" y2="105.4" stroke="#2e2e2e" stroke-width="0.72" />
<polygon points="54.3,34.4 53.3,37.9 55.3,37.9" fill="#2e2e2e" />
<polygon points="54.3,105.6 53.3,102.1 55.3,102.1" fill="#2e2e2e" />
<line x1="40" y1="105.6" x2="55" y2="105.6" stroke="#2e2e2e" stroke-width="0.72" />
<line x1="4.3" y1="89.1" x2="12" y2="89.1" stroke="#2e2e2e" stroke-width="0.72" />
<line x1="19" y1="89.1" x2="25" y2="89.1" stroke="#2e2e2e" stroke-width="0.72" />
<polygon points="13.4,89.1 9.9,88.1 9.9,90.1" fill="#2e2e2e" />
<polygon points="18,89.1 21.5,88.1 21.5,90.1" fill="#2e2e2e" />
<line x1="13.6" y1="109" x2="13.6" y2="129" stroke="#2e2e2e" stroke-width="0.72" />
<line x1="38.9" y1="109" x2="38.9" y2="129" stroke="#2e2e2e" stroke-width="0.72" />
<line x1="14" y1="127" x2="38.5" y2="127" stroke="#2e2e2e" stroke-width="0.72" />
<polygon points="13.8,127 17.3,126 17.3,128" fill="#2e2e2e" />
<polygon points="38.7,127 35.2,126 35.2,128" fill="#2e2e2e" />
<text x="5.4" y="25.1" font-size="5.6" fill="#2e2e2e" font-weight="normal" text-anchor="middle" >x</text>
<text x="16.5" y="23.5" font-size="6.2" fill="#2e2e2e" font-weight="normal" text-anchor="middle" >Y</text>
<text x="2.7" y="68.8" font-size="5.6" fill="#2e2e2e" font-weight="normal" text-anchor="middle" >X</text>
<text x="57.8" y="73.1" font-size="7" fill="#2e2e2e" font-weight="normal" text-anchor="middle" >d</text>
<text x="51.4" y="42" font-size="7.6" fill="#2e2e2e" font-weight="normal" text-anchor="middle" >t<tspan font-size="6.08" dy="1.3">f</tspan></text>
<text x="28.5" y="87.5" font-size="8.5" fill="#2e2e2e" font-weight="normal" text-anchor="middle" >t<tspan font-size="6.8" dy="1.3">w</tspan></text>
<text x="28" y="124" font-size="8" fill="#2e2e2e" font-weight="normal" text-anchor="middle" >b<tspan font-size="6.4" dy="1.3">f</tspan></text>
<rect x="0" y="0" width="52.5" height="267" fill="url(#gl)" />
<rect x="297.5" y="0" width="52.5" height="267" fill="url(#gr)" />
<polygon points="30.9,128.6 23,136.5 30.9,144.4 33.4,141.9 28,136.5 33.4,131.1" fill="#fff" opacity="0.62"/>
<polygon points="319.3,128.6 327.2,136.5 319.3,144.4 316.8,141.9 322.2,136.5 316.8,131.1" fill="#fff" opacity="0.93"/></svg></div>

<svg id="ui" width="600" height="491" viewBox="0 0 600 491">

<!-- window borders -->
<rect x="0" y="0" width="1" height="24" fill="#5b6473"/>
<rect x="0" y="24" width="1" height="21" fill="#7c7c7c"/><rect x="0" y="45" width="1" height="446" fill="#484848"/>
<rect x="0" y="490" width="600" height="1" fill="#2a2a2a"/><rect x="599.2" y="1" width="0.8" height="23" fill="#7d828c"/><rect x="599.2" y="24" width="0.8" height="21" fill="#7c7c7c"/><rect x="599.2" y="45" width="0.8" height="446" fill="#484848"/>
<!-- google favicon -->
<circle cx="16.5" cy="14.7" r="4.2" fill="#fff"/>
<g fill="none" stroke-width="1.5">
<path d="M18.9 12.9 A3 3 0 0 0 14.2 12.8" stroke="#ea4335"/>
<path d="M14.2 12.8 A3 3 0 0 0 14.1 16.5" stroke="#fbbc05"/>
<path d="M14.1 16.5 A3 3 0 0 0 18.6 16.9" stroke="#34a853"/>
<path d="M18.6 16.9 A3 3 0 0 0 19.5 14.8 L16.6 14.8" stroke="#4285f4"/>
</g>
<!-- tab close x's -->
<g stroke="#3c4043" stroke-width="1.1" fill="none">
<path d="M129.8 12.6 l4.2 4.2 M134 12.6 l-4.2 4.2"/>
<path d="M265.4 12.6 l4.2 4.2 M269.6 12.6 l-4.2 4.2"/>
<path d="M401.2 12.6 l4.2 4.2 M405.4 12.6 l-4.2 4.2"/>
<path d="M424.7 11.4 v6.6 M421.4 14.7 h6.6" stroke-width="1"/>
</g>
<rect x="140.6" y="10" width="0.7" height="10" fill="#9aa0a6"/>
<!-- caldsoft favicon -->
<defs>
<linearGradient id="cy1" x1="0" x2="1" y1="0" y2="0"><stop offset="0" stop-color="#e07a00"/><stop offset="0.45" stop-color="#ffe600"/><stop offset="1" stop-color="#ee9500"/></linearGradient>
<linearGradient id="cy2" x1="0" x2="0" y1="0" y2="1"><stop offset="0" stop-color="#e88400"/><stop offset="0.5" stop-color="#ffe600"/><stop offset="1" stop-color="#e88400"/></linearGradient>
</defs>
<rect x="152.6" y="12" width="4.2" height="5.3" fill="url(#cy2)"/>
<rect x="147.5" y="10" width="5.8" height="9.3" fill="url(#cy1)"/>
<!-- active tab favicon (document) -->
<path d="M284 10.4 h5.2 l2.6 2.6 v6.6 h-7.8z" fill="#f4f6f8" stroke="#c4c9d0" stroke-width="0.6"/>
<rect x="283.6" y="10.6" width="1.1" height="8.6" fill="#3f8fd6"/>
<path d="M286 15 h4.5 M286 16.6 h4.5" stroke="#d5d9de" stroke-width="0.6"/>
<!-- active tab lower curves -->
<path d="M272 24 Q276 24 276 20 V24z" fill="#fff"/>
<path d="M416 24 Q412 24 412 20 V24z" fill="#fff"/>
<!-- window controls -->
<g stroke="#2b2b2b" stroke-width="0.9" fill="none">
<path d="M531.6 8.6 h6"/>
<rect x="557.3" y="6.2" width="5.6" height="5.4"/>
<path d="M583.2 6 l5.9 5.9 M589.1 6 l-5.9 5.9"/>
</g>
<!-- nav arrows -->
<path transform="translate(7.14,28.94) scale(0.48)" fill="#5f6368" d="M20 11H7.83l5.59-5.59L12 4l-8 8 8 8 1.41-1.41L7.83 13H20v-2z"/>
<path transform="translate(25.44,28.94) scale(0.48)" fill="#c0c3c7" d="M12 4l-1.41 1.41L16.17 11H4v2h12.17l-5.58 5.59L12 20l8-8z"/>
<path transform="translate(43.3,28.7) scale(0.5)" fill="#5f6368" d="M17.65 6.35C16.2 4.9 14.21 4 12 4c-4.42 0-7.99 3.58-7.99 8s3.57 8 7.99 8c3.73 0 6.84-2.55 7.73-6h-2.08c-.82 2.33-3.04 4-5.65 4-3.31 0-6-2.69-6-6s2.69-6 6-6c1.66 0 3.14.69 4.22 1.78L13 11h7V4l-2.35 2.35z"/>
<!-- lock -->
<rect x="69.7" y="33.9" width="4.6" height="3.8" rx="0.5" fill="#5f6368"/>
<path d="M70.7 34 v-1 a1.3 1.3 0 0 1 2.6 0 v1" stroke="#5f6368" stroke-width="0.8" fill="none"/>
<!-- bookmark star -->
<path transform="translate(541.5,30.1) scale(0.39)" fill="#5f6368" d="M22 9.24l-7.19-.62L12 2 9.19 8.63 2 9.24l5.46 4.73L5.82 21 12 17.27 18.18 21l-1.63-7.03L22 9.24zM12 15.4l-3.76 2.27 1-4.28-3.32-2.88 4.38-.38L12 6.1l1.71 4.04 4.38.38-3.32 2.88 1 4.28L12 15.4z"/>
<!-- avatar -->
<circle cx="568.8" cy="34.7" r="6.3" fill="#4527a0"/>
<text x="568.8" y="37.1" font-size="6.6" font-weight="bold" fill="#fff" text-anchor="middle" font-family="Liberation Sans, sans-serif">C</text>
<!-- menu dots -->
<circle cx="586.7" cy="32" r="0.8" fill="#5f6368"/><circle cx="586.7" cy="34.7" r="0.8" fill="#5f6368"/><circle cx="586.7" cy="37.4" r="0.8" fill="#5f6368"/>
<!-- carousel dots -->
<circle cx="391.5" cy="405" r="3.4" fill="#fff"/>
<circle cx="400" cy="405" r="2.6" fill="none" stroke="#fff" stroke-width="0.7"/>
<circle cx="408.8" cy="405" r="2.6" fill="none" stroke="#fff" stroke-width="0.7"/>
<!-- title star -->
<polygon points="266.10,115.30 267.28,118.28 270.47,118.48 268.00,120.52 268.80,123.62 266.10,121.90 263.40,123.62 264.20,120.52 261.73,118.48 264.92,118.28" fill="none" stroke="#d9a51e" stroke-width="1.2" stroke-linejoin="miter"/>
</svg>
</div>
</body></html>
